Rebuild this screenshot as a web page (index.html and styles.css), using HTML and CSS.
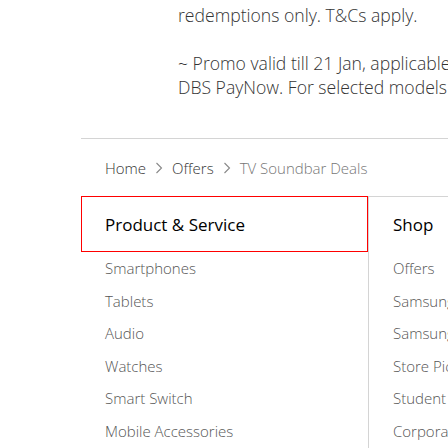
FILE: index.html
```html
<!DOCTYPE html>
<html>
<head>
<meta charset="utf-8">
<link rel="stylesheet" href="styles.css">
</head>
<body>
<div class="promo">
  <p class="p1">redemptions only. T&amp;Cs apply.</p>
  <p class="p2">~ Promo valid till 21 Jan, applicable for payments made via<br>DBS PayNow. For selected models only.</p>
</div>
<div class="main">
  <nav class="crumbs">
    <span class="crumb">Home</span>
    <svg class="chev" width="8" height="12" viewBox="0 0 8 12"><path d="M1.5 1 L6.5 6 L1.5 11" fill="none" stroke="#888" stroke-width="1.1"/></svg>
    <span class="crumb">Offers</span>
    <svg class="chev" width="8" height="12" viewBox="0 0 8 12"><path d="M1.5 1 L6.5 6 L1.5 11" fill="none" stroke="#888" stroke-width="1.1"/></svg>
    <span class="crumb current">TV Soundbar Deals</span>
  </nav>
  <div class="cols">
    <div class="col col-left">
      <div class="col-title focused">Product &amp; Service</div>
      <ul class="links">
        <li>Smartphones</li>
        <li>Tablets</li>
        <li>Audio</li>
        <li>Watches</li>
        <li>Smart Switch</li>
        <li>Mobile Accessories</li>
      </ul>
    </div>
    <div class="col col-right">
      <div class="col-title">Shop</div>
      <ul class="links">
        <li>Offers</li>
        <li>Samsung Experience Store</li>
        <li>Samsung Care+</li>
        <li>Store Pickup</li>
        <li>Student Offers</li>
        <li>Corporate Offers</li>
      </ul>
    </div>
  </div>
</div>
</body>
</html>
```
FILE: styles.css
```css
html, body {
  margin: 0;
  padding: 0;
  background: #fff;
  overflow: hidden;
}
body {
  width: 448px;
  height: 448px;
  font-family: "Open Sans", "Noto Sans", sans-serif;
  font-weight: 350;
}
.promo {
  padding-left: 178px;
  padding-top: 3px;
  color: #333;
  font-size: 17.6px;
  line-height: 24px;
  white-space: nowrap;
}
.promo p {
  margin: 0;
}
.promo .p2 {
  margin-top: 24px;
}
.main {
  margin-left: 81px;
  margin-top: 39px;
  border-top: 1px solid #d4d4d4;
  width: 600px;
}
.crumbs {
  display: flex;
  align-items: center;
  gap: 9px;
  padding-left: 24px;
  height: 57px;
  font-size: 15px;
  color: #363636;
  white-space: nowrap;
}
.crumb.current {
  color: #767676;
}
.cols {
  display: flex;
}
.col-left {
  width: 287px;
  flex: none;
}
.col-right {
  border-left: 1px solid #d4d4d4;
  border-top: 1px solid #d4d4d4;
  flex: 1;
  min-height: 300px;
}
.col-title {
  height: 55px;
  display: flex;
  align-items: center;
  padding-left: 24px;
  font-size: 17px;
  font-weight: 500;
  color: #000;
  box-sizing: border-box;
}
.col-title.focused {
  border: 1px solid #f00;
  height: 56px;
  padding-left: 23px;
}
.links {
  list-style: none;
  margin: 0;
  padding: 0 0 0 24px;
}
.links li {
  height: 32.6px;
  line-height: 32.6px;
  font-size: 15px;
  color: #555;
  white-space: nowrap;
}
```
